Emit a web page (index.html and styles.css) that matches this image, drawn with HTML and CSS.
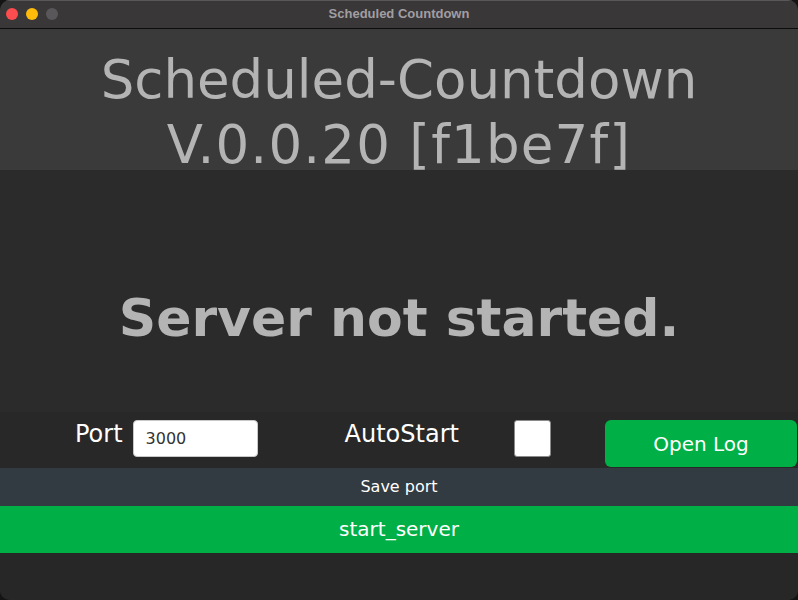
FILE: index.html
```
<!DOCTYPE html>
<html>
<head>
<meta charset="utf-8">
<link rel="stylesheet" href="styles.css">
</head>
<body>
<div class="window">
  <div class="titlebar">
    <div class="lights">
      <span class="light red"></span>
      <span class="light yellow"></span>
      <span class="light grey"></span>
    </div>
    <div class="wintitle">Scheduled Countdown</div>
  </div>
  <div class="header">Scheduled-Countdown<br><span class="version">V.0.0.20 [f1be7f]</span></div>
  <div class="status">Server not started.</div>
  <div class="controls">
    <span class="label port-label">Port</span>
    <div class="input">3000</div>
    <span class="label auto-label">AutoStart</span>
    <div class="checkbox"></div>
    <div class="openlog">Open Log</div>
  </div>
  <div class="savebar">Save port</div>
  <div class="startbar">start_server</div>
  <div class="footer"></div>
</div>
</body>
</html>
```
FILE: styles.css
```
* { box-sizing: border-box; }
html, body { margin: 0; padding: 0; background: #141414; }
body { width: 798px; height: 600px; overflow: hidden; font-family: "DejaVu Sans", Verdana, sans-serif; }
.window {
  width: 798px; height: 600px; border-radius: 10px; overflow: hidden;
  display: flex; flex-direction: column; background: #272727;
}
.titlebar {
  height: 29px; flex: none; background: #3a3739; border-bottom: 1px solid #0c0c0c;
  position: relative; display: flex; align-items: center; justify-content: center;
  box-shadow: inset 0 1px 0 #5a575a;
}
.lights { position: absolute; left: 6px; top: 8px; display: flex; gap: 8px; }
.light { width: 12px; height: 12px; border-radius: 50%; display: block; }
.red { background: #fe4d4f; }
.yellow { background: #febb0a; }
.grey { background: #5a575b; }
.wintitle { font-family: "Liberation Sans", Arial, sans-serif; font-weight: bold; font-size: 13px; color: #a19ea1; margin-top: -1px; }
.header {
  height: 141px; flex: none; background: #3a3a3a; color: #b4b4b4;
  font-size: 53px; line-height: 65px; text-align: center; padding-top: 18px;
  white-space: nowrap; position: relative; z-index: 1;
}
.version { letter-spacing: 1.2px; }
.status {
  height: 242px; flex: none; background: #2b2b2b; color: #b4b4b4;
  font-weight: bold; font-size: 52px; text-align: center; padding-top: 118px;
}
.controls {
  height: 56px; flex: none; background: #282828; display: flex; align-items: flex-start;
  padding-top: 8px; padding-left: 75px;
}
.label { color: #ffffff; font-size: 24px; line-height: 28px; }
.port-label { margin-right: 10px; }
.input {
  width: 125px; height: 37px; background: #fff; border: 1px solid #c8c8c8; border-radius: 4px;
  color: #333; font-size: 16px; line-height: 35px; padding-left: 12px;
}
.auto-label { margin-left: 87px; margin-right: 55px; }
.checkbox {
  width: 37px; height: 37px; background: #fff; border: 1px solid #8a8a8a; border-radius: 3px;
}
.openlog {
  margin-left: 54px; width: 192px; height: 47px; background: #00b046; border-radius: 6px;
  color: #fff; font-size: 20px; line-height: 47px; text-align: center; padding-top: 1px;
}
.savebar {
  height: 38px; flex: none; background: #323a42; color: #fff; font-size: 16px;
  line-height: 38px; text-align: center;
}
.startbar {
  height: 47px; flex: none; background: #00b046; color: #fff; font-size: 20px;
  line-height: 47px; text-align: center;
}
.footer { flex: 1; background: #272727; }
```
